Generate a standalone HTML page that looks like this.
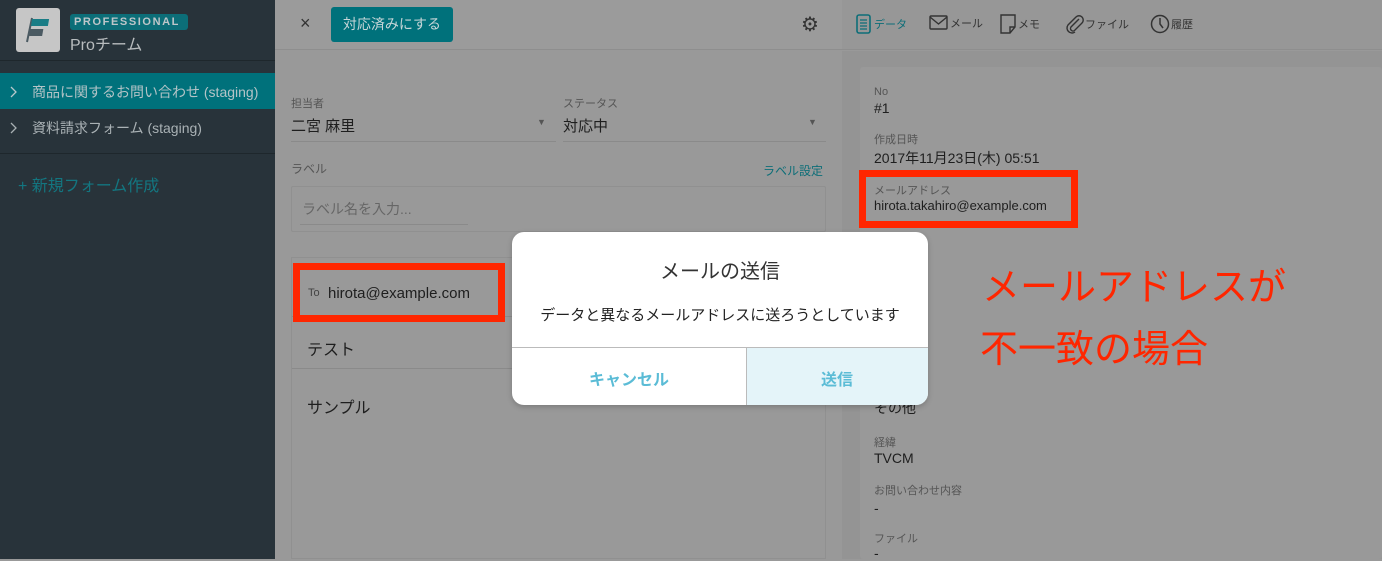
<!DOCTYPE html>
<html><head><meta charset="utf-8"><style>
*{margin:0;padding:0;box-sizing:border-box}
body{width:1382px;height:559px;overflow:hidden;position:relative;background:#999;font-family:"Liberation Sans","Noto Sans CJK JP",sans-serif;color:#222}
.a{position:absolute;white-space:nowrap}
.side{left:0;top:0;width:275px;height:559px;background:#28333a}
.lbl{font-size:11px;color:#555}
.val{font-size:14px;color:#1e1e1e}
.tab{font-size:11px;color:#333;display:flex;align-items:center;gap:1px}
</style></head><body>
<div class="a side"></div>
<div class="a" style="left:16px;top:8px;width:44px;height:44px;background:#c6c6c6;border-radius:3px"></div>
<svg class="a" style="left:22px;top:14px" width="32" height="32"><path d="M10 4 L5 28" stroke="#4b5a62" stroke-width="2"/><rect x="11" y="5" width="17" height="7" fill="#1a7d86" transform="skewX(-10)"/><rect x="11" y="15" width="13" height="7" fill="#4b5a62" transform="skewX(-10)"/></svg>
<div class="a" style="left:70px;top:14px;width:118px;height:16px;background:#0c6e78;border-radius:3px;color:#bfc6c9;font-size:11px;letter-spacing:1.6px;line-height:16px;padding-left:4px;font-weight:bold;overflow:hidden">PROFESSIONAL</div>
<div class="a" style="left:70px;top:31px;font-size:16px;color:#b8bcbe">Proチーム</div>
<div class="a" style="left:0;top:60px;width:275px;height:1px;background:#1e272c"></div>
<div class="a" style="left:0;top:73px;width:275px;height:36px;background:#00717b"></div>
<svg class="a" style="left:10px;top:86px" width="8" height="12"><path d="M1 1 L6 6 L1 11" stroke="#b8c8cb" fill="none" stroke-width="1.3"/></svg>
<div class="a" style="left:32px;top:82px;font-size:14px;color:#b4c4c7">商品に関するお問い合わせ (staging)</div>
<svg class="a" style="left:10px;top:122px" width="8" height="12"><path d="M1 1 L6 6 L1 11" stroke="#a8b0b3" fill="none" stroke-width="1.3"/></svg>
<div class="a" style="left:32px;top:118px;font-size:14px;color:#aab2b5">資料請求フォーム (staging)</div>
<div class="a" style="left:0;top:153px;width:275px;height:1px;background:#1e272c"></div>
<div class="a" style="left:18px;top:172px;font-size:16px;color:#137680">+ 新規フォーム作成</div>

<div class="a" style="left:275px;top:0;width:1107px;height:50px;background:#9b9b9b;border-bottom:1px solid #8e8e8e"></div>
<div class="a" style="left:300px;top:13px;font-size:18px;color:#333">×</div>
<div class="a" style="left:331px;top:7px;width:122px;height:35px;background:#00717b;border-radius:3px;color:#c7d6d8;font-size:14px;line-height:35px;text-align:center">対応済みにする</div>
<div class="a" style="left:801px;top:12px;font-size:20px;color:#333">⚙</div>
<div class="a" style="left:842px;top:0;width:540px;height:50px;background:#979797;border-bottom:1px solid #8e8e8e"></div>
<div class="a tab" style="left:855px;top:14px;color:#0d6e78"><svg width="18" height="20"><rect x="2" y="1" width="13" height="18" rx="2" fill="none" stroke="#0d6e78" stroke-width="1.6"/><path d="M5 6h7M5 9h7M5 12h7M5 15h7" stroke="#0d6e78" stroke-width="1.2"/></svg>データ</div>
<div class="a tab" style="left:929px;top:14px"><svg width="20" height="18"><rect x="1" y="2" width="17" height="13" rx="1" fill="none" stroke="#333" stroke-width="1.4"/><path d="M1 3 L9.5 10 L18 3" fill="none" stroke="#333" stroke-width="1.4"/></svg>メール</div>
<div class="a tab" style="left:1000px;top:14px"><svg width="17" height="20"><path d="M1 1h14v12l-5 6H1z M15 13h-5v6" fill="none" stroke="#333" stroke-width="1.4"/></svg>メモ</div>
<div class="a tab" style="left:1066px;top:14px"><svg width="18" height="20"><path d="M13 5 L5 13 a2.5 2.5 0 0 0 3.5 3.5 L16 9 a4 4 0 0 0-6-6 L2 11 a5 5 0 0 0 7 7" fill="none" stroke="#333" stroke-width="1.4"/></svg>ファイル</div>
<div class="a tab" style="left:1150px;top:13px"><svg width="20" height="22"><circle cx="10" cy="11" r="8.5" fill="none" stroke="#333" stroke-width="1.5"/><path d="M10 5v6l3 4" fill="none" stroke="#333" stroke-width="1.5"/></svg>履歴</div>

<div class="a" style="left:842px;top:51px;width:540px;height:508px;background:#949494"></div>
<div class="a" style="left:860px;top:67px;width:522px;height:492px;background:#999;border-radius:3px"></div>
<div class="a lbl" style="left:874px;top:86px">No</div>
<div class="a val" style="left:874px;top:100px">#1</div>
<div class="a lbl" style="left:874px;top:131px">作成日時</div>
<div class="a val" style="left:874px;top:148px">2017年11月23日(木) 05:51</div>
<div class="a lbl" style="left:874px;top:182px">メールアドレス</div>
<div class="a val" style="left:874px;top:198px;font-size:13px">hirota.takahiro@example.com</div>
<div class="a" style="left:859px;top:170px;width:219px;height:58px;border:7px solid #ff2600"></div>
<div class="a val" style="left:874px;top:398px">その他</div>
<div class="a lbl" style="left:874px;top:434px">経緯</div>
<div class="a val" style="left:874px;top:450px">TVCM</div>
<div class="a lbl" style="left:874px;top:482px">お問い合わせ内容</div>
<div class="a val" style="left:874px;top:500px">-</div>
<div class="a lbl" style="left:874px;top:530px">ファイル</div>
<div class="a val" style="left:874px;top:545px">-</div>

<div class="a lbl" style="left:291px;top:95px">担当者</div>
<div class="a val" style="left:291px;top:115px;font-size:15px">二宮 麻里</div>
<div class="a" style="left:537px;top:117px;font-size:9px;color:#555">▼</div>
<div class="a" style="left:291px;top:141px;width:265px;height:1px;background:#8a8a8a"></div>
<div class="a lbl" style="left:563px;top:95px">ステータス</div>
<div class="a val" style="left:563px;top:115px;font-size:15px">対応中</div>
<div class="a" style="left:808px;top:117px;font-size:9px;color:#555">▼</div>
<div class="a" style="left:563px;top:141px;width:263px;height:1px;background:#8a8a8a"></div>
<div class="a lbl" style="left:291px;top:160px;font-size:12px">ラベル</div>
<div class="a" style="left:763px;top:162px;font-size:12px;color:#0d6e78">ラベル設定</div>
<div class="a" style="left:291px;top:186px;width:535px;height:46px;border:1px solid #909090;border-radius:2px"></div>
<div class="a" style="left:302px;top:199px;font-size:14px;color:#666">ラベル名を入力...</div>
<div class="a" style="left:300px;top:224px;width:168px;height:1px;background:#8a8a8a"></div>
<div class="a" style="left:291px;top:257px;width:535px;height:302px;border:1px solid #909090"></div>
<div class="a" style="left:292px;top:316px;width:533px;height:1px;background:#8a8a8a"></div>
<div class="a" style="left:292px;top:368px;width:533px;height:1px;background:#8a8a8a"></div>
<div class="a" style="left:308px;top:287px;font-size:11px;color:#444">To</div>
<div class="a val" style="left:328px;top:285px;font-size:15px">hirota@example.com</div>
<div class="a" style="left:293px;top:263px;width:212px;height:59px;border:7px solid #ff2600"></div>
<div class="a val" style="left:307px;top:336px;font-size:16px">テスト</div>
<div class="a val" style="left:307px;top:394px;font-size:16px">サンプル</div>

<div class="a" style="left:512px;top:232px;width:416px;height:173px;background:#fff;border-radius:12px;overflow:hidden;box-shadow:0 2px 6px rgba(0,0,0,.2)">
<div class="a" style="left:0;top:23px;width:416px;text-align:center;font-size:20px;color:#333">メールの送信</div>
<div class="a" style="left:0;top:72px;width:416px;text-align:center;font-size:15px;color:#222">データと異なるメールアドレスに送ろうとしています</div>
<div class="a" style="left:0;top:115px;width:416px;height:1px;background:#bbb"></div>
<div class="a" style="left:234px;top:116px;width:182px;height:57px;background:#e4f4f9;border-left:1px solid #bbb"></div>
<div class="a" style="left:0;top:134px;width:234px;text-align:center;font-size:16px;font-weight:bold;color:#5bbcd6">キャンセル</div>
<div class="a" style="left:234px;top:134px;width:182px;text-align:center;font-size:16px;font-weight:bold;color:#5bbcd6">送信</div>
</div>

<div class="a" style="left:982px;top:256px;font-size:38px;color:#ff2600">メールアドレスが</div>
<div class="a" style="left:980px;top:318px;font-size:38px;color:#ff2600">不一致の場合</div>
</body></html>
